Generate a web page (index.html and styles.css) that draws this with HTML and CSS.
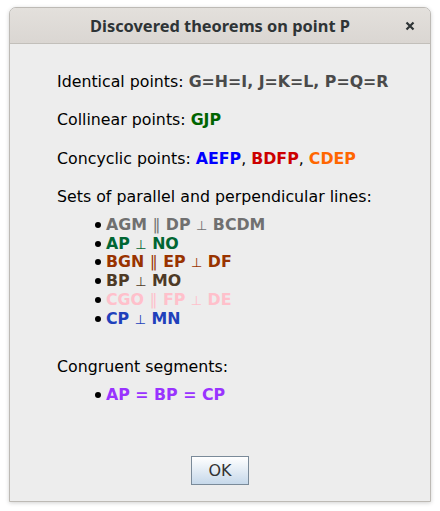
FILE: index.html
```html
<!DOCTYPE html>
<html>
<head>
<meta charset="utf-8">
<link rel="stylesheet" href="styles.css">
</head>
<body>
<div class="window">
  <div class="titlebar">
    <div class="title">Discovered theorems on point P</div>
    <div class="close"><svg width="10" height="10" viewBox="0 0 10 10"><path d="M1.5 1.5 L8.5 8.5 M8.5 1.5 L1.5 8.5" stroke="#2e3436" stroke-width="2.2" stroke-linecap="butt"/></svg></div>
  </div>
  <div class="content">
    <div class="para">Identical points: <b class="c-grey">G=H=I, J=K=L, P=Q=R</b></div>
    <div class="para">Collinear points: <b class="c-green">GJP</b></div>
    <div class="para">Concyclic points: <b class="c-blue">AEFP</b>, <b class="c-red">BDFP</b>, <b class="c-orange">CDEP</b></div>
    <div class="para tight">Sets of parallel and perpendicular lines:</div>
    <ul class="list">
      <li><b class="c-l1">AGM <span class="par">∥</span> DP <span class="sym">⊥</span> BCDM</b></li>
      <li><b class="c-l2">AP <span class="sym">⊥</span> NO</b></li>
      <li><b class="c-l3">BGN <span class="par">∥</span> EP <span class="sym">⊥</span> DF</b></li>
      <li><b class="c-l4">BP <span class="sym">⊥</span> MO</b></li>
      <li><b class="c-l5">CGO <span class="par">∥</span> FP <span class="sym">⊥</span> DE</b></li>
      <li><b class="c-l6">CP <span class="sym">⊥</span> MN</b></li>
    </ul>
    <div class="para tight">Congruent segments:</div>
    <ul class="list">
      <li><b class="c-purple">AP = BP = CP</b></li>
    </ul>
    <div class="buttons"><button class="ok">OK</button></div>
  </div>
</div>
</body>
</html>
```
FILE: styles.css
```css
html, body {
  margin: 0;
  padding: 0;
  background: #ffffff;
}
body {
  width: 440px;
  height: 511px;
  overflow: hidden;
}
.window {
  position: relative;
  margin: 7px 0 0 9px;
  width: 420px;
  height: 493px;
  border: 1px solid #bdbab5;
  border-radius: 7px 7px 0 0;
  background: #ededed;
  box-shadow: 0 1px 4px rgba(0,0,0,0.18);
  display: flex;
  flex-direction: column;
  overflow: hidden;
}
.titlebar {
  height: 35px;
  flex: none;
  background: linear-gradient(#e3e0dc, #dad6d2);
  border-bottom: 1px solid #c2bfba;
  display: flex;
  align-items: center;
  justify-content: center;
  position: relative;
}
.title {
  font-family: "Noto Sans", "DejaVu Sans", sans-serif;
  font-weight: bold;
  font-size: 16.4px;
  color: #2e3436;
  margin-top: -1px;
}
.close {
  position: absolute;
  right: 15px;
  top: 13px;
  width: 10px;
  height: 10px;
  display: flex;
}
.content {
  flex: 1;
  padding: 28px 0 16px 47px;
  font-family: "DejaVu Sans", sans-serif;
  font-size: 15.8px;
  line-height: 19px;
  color: #000;
  display: flex;
  flex-direction: column;
}
.para {
  margin-bottom: 19.3px;
}
.para.tight {
  margin-bottom: 9px;
}
.list {
  margin: 0 0 29px 0;
  padding: 0 0 0 49px;
  list-style: none;
}
.list li {
  position: relative;
  height: 18.8px;
}
.list li::before {
  content: "";
  position: absolute;
  left: -11px;
  top: 7px;
  width: 6px;
  height: 6px;
  border-radius: 50%;
  background: #000;
}
.sym {
  font-weight: normal;
  font-size: 13px;
  line-height: 0;
}
.par {
  font-weight: normal;
  line-height: 0;
}
b { font-weight: bold; }
.c-grey { color: #4a4a4a; }
.c-green { color: #006400; }
.c-blue { color: #0000ff; }
.c-red { color: #cc0000; }
.c-orange { color: #ff6600; }
.c-l1 { color: #707070; }
.c-l2 { color: #006633; }
.c-l3 { color: #993300; }
.c-l4 { color: #4d3a26; }
.c-l5 { color: #ffc0cb; }
.c-l6 { color: #2040bb; }
.c-purple { color: #9933ff; }
.buttons {
  margin-top: auto;
  display: flex;
  justify-content: center;
  padding-right: 47px;
}
.ok {
  width: 58px;
  height: 29px;
  border: 1px solid #7a8a99;
  border-radius: 0;
  background: linear-gradient(#ffffff, #c6d8ea);
  font-family: "DejaVu Sans", sans-serif;
  font-size: 16px;
  color: #333;
  padding: 0;
}
```
